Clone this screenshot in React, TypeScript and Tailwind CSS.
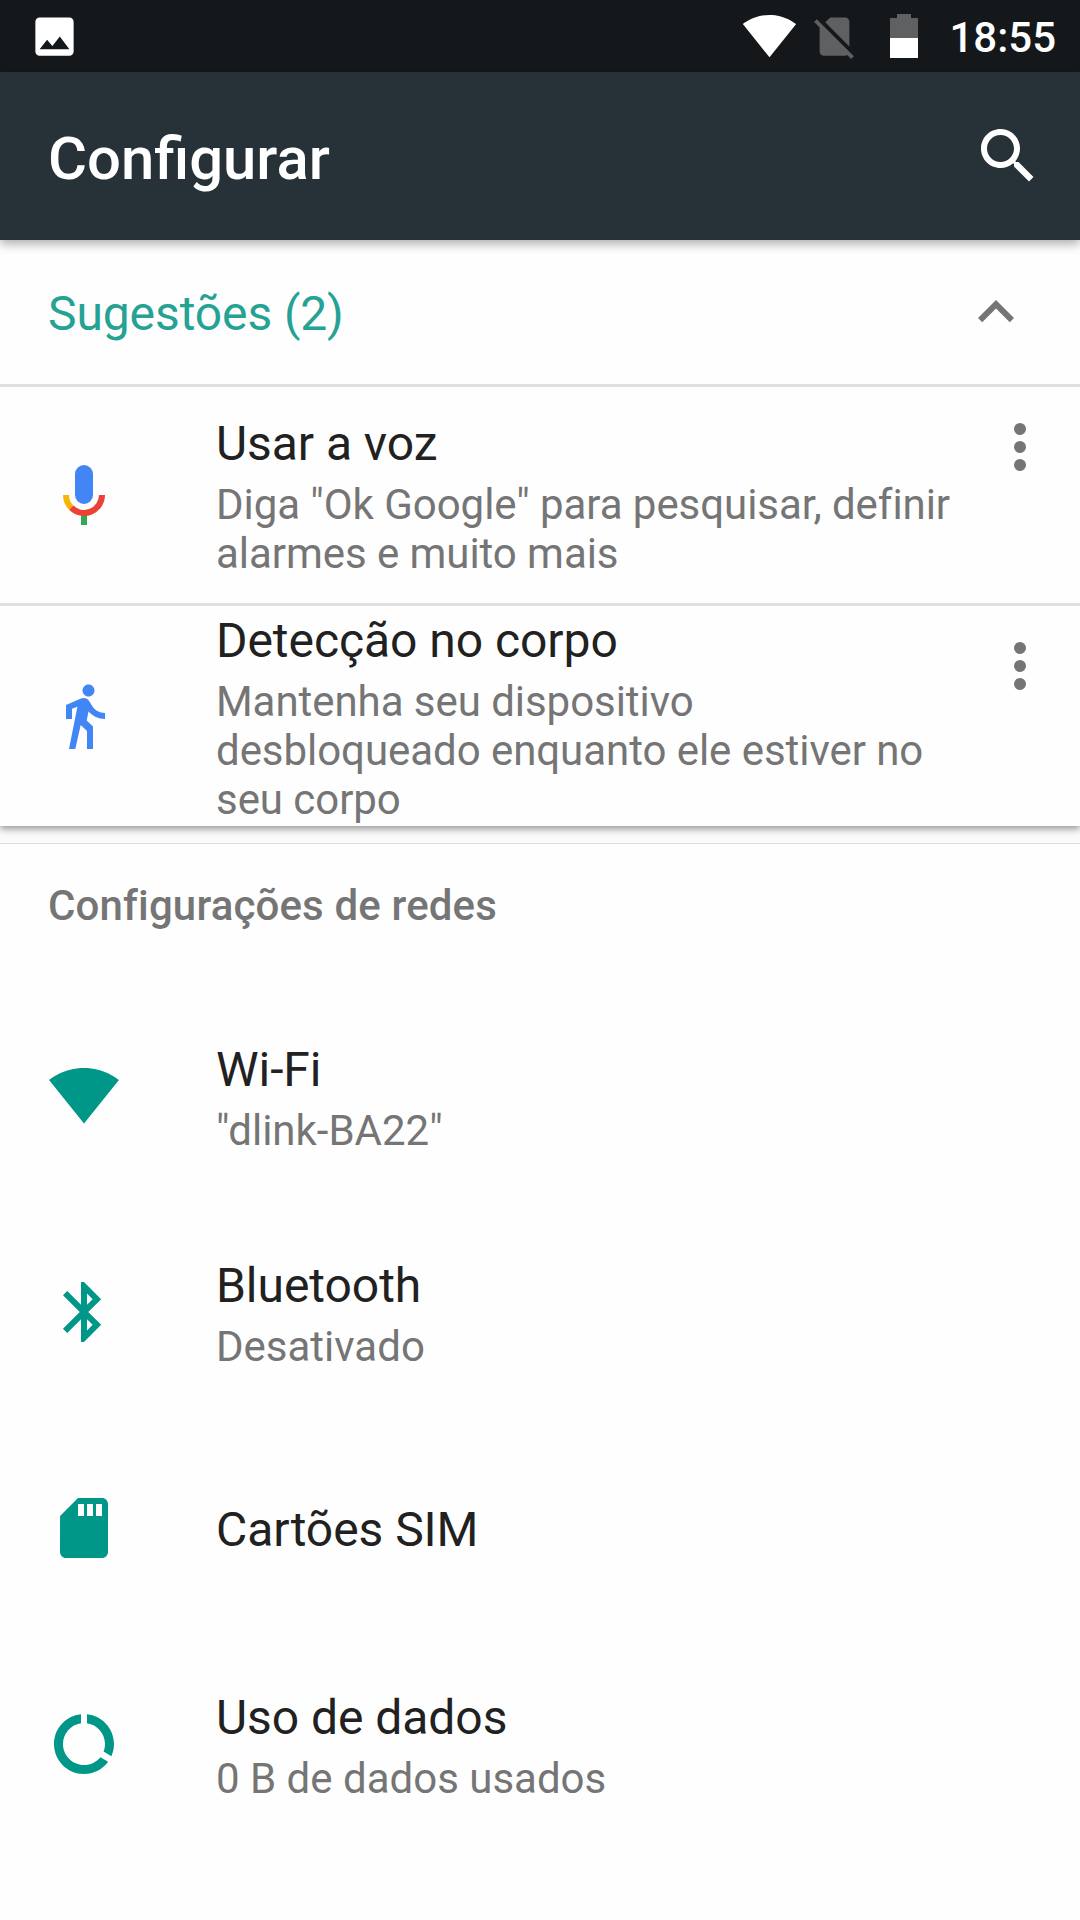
import type { ReactNode } from "react";

type IconProps = {
  className?: string;
};

type SettingItem = {
  title: string;
  summary?: string;
  icon: ReactNode;
};

function WifiIcon({ className }: IconProps) {
  return (
    <svg viewBox="0 0 24 24" fill="currentColor" className={className}>
      <path d="M12.01 21.49L23.64 7c-.45-.34-4.93-4-11.64-4C5.28 3 .81 6.66.36 7l11.63 14.49.01.01.01-.01z" />
    </svg>
  );
}

function PhotoIcon({ className }: IconProps) {
  return (
    <svg viewBox="0 0 24 24" fill="currentColor" className={className}>
      <path d="M21 19V5c0-1.1-.9-2-2-2H5c-1.1 0-2 .9-2 2v14c0 1.1.9 2 2 2h14c1.1 0 2-.9 2-2zM8.5 13.5l2.5 3.01L14.5 12l4.5 6H5l3.5-4.5z" />
    </svg>
  );
}

function NoSimIcon({ className }: IconProps) {
  return (
    <svg viewBox="0 0 24 24" fill="currentColor" className={className}>
      <path d="M18.99 5c0-1.1-.89-2-1.99-2h-7L7.66 5.34 19 16.68 18.99 5zM3.65 3.88L2.38 5.15 5 7.77V19c0 1.1.9 2 2 2h10.01c.35 0 .67-.1.96-.26l1.88 1.88 1.27-1.27L3.65 3.88z" />
    </svg>
  );
}

function BatteryIcon({ className }: IconProps) {
  return (
    <svg viewBox="0 0 28 44" className={className}>
      <path d="M7 0h14v4h7v20H0V4h7z" fill="#5e6061" />
      <path d="M0 24h28v20H0z" fill="#fff" />
    </svg>
  );
}

function SearchIcon({ className }: IconProps) {
  return (
    <svg viewBox="0 0 24 24" fill="currentColor" className={className}>
      <path d="M15.5 14h-.79l-.28-.27C15.41 12.59 16 11.11 16 9.5 16 5.91 13.09 3 9.5 3S3 5.91 3 9.5 5.91 16 9.5 16c1.61 0 3.09-.59 4.23-1.57l.27.28v.79l5 4.99L20.49 19l-4.99-5zm-6 0C7.01 14 5 11.99 5 9.5S7.01 5 9.5 5 14 7.01 14 9.5 11.99 14 9.5 14z" />
    </svg>
  );
}

function CollapseIcon({ className }: IconProps) {
  return (
    <svg viewBox="0 0 24 24" fill="currentColor" className={className}>
      <path d="M12 8l-6 6 1.41 1.41L12 10.83l4.59 4.58L18 14z" />
    </svg>
  );
}

function MoreIcon({ className }: IconProps) {
  return (
    <svg viewBox="0 0 24 24" fill="currentColor" className={className}>
      <circle cx="12" cy="6" r="2" />
      <circle cx="12" cy="12" r="2" />
      <circle cx="12" cy="18" r="2" />
    </svg>
  );
}

function MicIcon({ className }: IconProps) {
  return (
    <svg viewBox="0 0 24 24" fill="none" className={className}>
      <rect x="9" y="2" width="6" height="13" rx="3" fill="#4285f4" />
      <path d="M11 18.5h2V22h-2z" fill="#34a853" />
      <path d="M6 12a6 6 0 0 0 1.76 4.24" stroke="#f9b504" strokeWidth="2" />
      <path d="M7.76 16.24A6 6 0 0 0 18 12" stroke="#ea4335" strokeWidth="2" />
    </svg>
  );
}

function WalkIcon({ className }: IconProps) {
  return (
    <svg viewBox="0 0 24 24" fill="#4285f4" className={className}>
      <path d="M13.5 5.5c1.1 0 2-.9 2-2s-.9-2-2-2-2 .9-2 2 .9 2 2 2zM9.8 8.9L7 23h2.1l1.8-8 2.1 2v6h2v-7.5l-2.1-2 .6-3C14.8 12 16.8 13 19 13v-2c-1.9 0-3.5-1-4.3-2.4l-1-1.6c-.4-.6-1-1-1.7-1-.3 0-.5.1-.8.1L6 8.3V13h2V9.6l1.8-.7" />
    </svg>
  );
}

function BluetoothIcon({ className }: IconProps) {
  return (
    <svg viewBox="0 0 24 24" fill="currentColor" className={className}>
      <path d="M17.71 7.71L12 2h-1v7.59L6.41 5 5 6.41 10.59 12 5 17.59 6.41 19 11 14.41V22h1l5.71-5.71-4.3-4.29 4.3-4.29zM13 5.83l1.88 1.88L13 9.59V5.83zm1.88 10.46L13 18.17v-3.76l1.88 1.88z" />
    </svg>
  );
}

function SimCardIcon({ className }: IconProps) {
  return (
    <svg viewBox="0 0 24 24" fill="currentColor" className={className}>
      <path d="M18 2h-8L4.02 8 4 20c0 1.1.9 2 2 2h12c1.1 0 2-.9 2-2V4c0-1.1-.9-2-2-2zm-6 6h-2V4h2v4zm3 0h-2V4h2v4zm3 0h-2V4h2v4z" />
    </svg>
  );
}

function DataUsageIcon({ className }: IconProps) {
  return (
    <svg viewBox="0 0 24 24" fill="currentColor" className={className}>
      <path d="M13 2.05v3.03c3.39.49 6 3.39 6 6.92 0 .9-.18 1.75-.48 2.54l2.6 1.53c.56-1.24.88-2.62.88-4.07 0-5.18-3.95-9.45-9-9.95zM12 19c-3.87 0-7-3.13-7-7 0-3.53 2.61-6.43 6-6.92V2.05c-5.06.5-9 4.76-9 9.95 0 5.52 4.47 10 9.99 10 3.31 0 6.24-1.61 8.06-4.09l-2.6-1.53C16.17 17.98 14.21 19 12 19z" />
    </svg>
  );
}

const suggestions: SettingItem[] = [
  {
    title: "Usar a voz",
    summary: 'Diga "Ok Google" para pesquisar, definir alarmes e muito mais',
    icon: <MicIcon className="size-18" />,
  },
  {
    title: "Detecção no corpo",
    summary:
      "Mantenha seu dispositivo desbloqueado enquanto ele estiver no seu corpo",
    icon: <WalkIcon className="size-18" />,
  },
];

const networkItems: SettingItem[] = [
  {
    title: "Wi-Fi",
    summary: '"dlink-BA22"',
    icon: <WifiIcon className="mb-0.5 size-18" />,
  },
  {
    title: "Bluetooth",
    summary: "Desativado",
    icon: <BluetoothIcon className="size-18" />,
  },
  {
    title: "Cartões SIM",
    icon: <SimCardIcon className="size-18" />,
  },
  {
    title: "Uso de dados",
    summary: "0 B de dados usados",
    icon: <DataUsageIcon className="size-18" />,
  },
];

function StatusBar() {
  return (
    <div className="flex h-[72px] shrink-0 items-center justify-between bg-[#14181b] pl-[28.5px] pr-6 text-white">
      <PhotoIcon className="size-[51px]" />
      <div className="flex items-center">
        <WifiIcon className="mb-0.5 size-[55px]" />
        <NoSimIcon className="ml-3 size-[51px] text-[#5e6061]" />
        <BatteryIcon className="ml-[30px] h-11 w-7" />
        <span className="ml-[31px] pt-0.5 text-[42px] font-medium leading-[49px]">
          18:55
        </span>
      </div>
    </div>
  );
}

function ItemText({ title, summary }: { title: string; summary?: string }) {
  return (
    <div className="min-w-0 flex-1 pt-1">
      <p className="text-5xl leading-[56px] tracking-[-0.05px] text-[#212121]">
        {title}
      </p>
      {summary && (
        <p className="mt-2 text-[42px] leading-[49px] text-[#757575]">
          {summary}
        </p>
      )}
    </div>
  );
}

export default function App() {
  return (
    <div
      className="flex h-[1920px] w-[1080px] flex-col overflow-hidden bg-[#fafafa]"
      style={{ fontFamily: "Roboto, 'Noto Sans', sans-serif" }}
    >
      <StatusBar />

      <header className="relative z-10 flex h-[168px] shrink-0 items-center justify-between bg-[#273238] pl-12 pr-9 text-white shadow-[0_4px_10px_rgba(0,0,0,0.32)]">
        <h1 className="pt-[5px] text-[59.8px] font-medium leading-[70px]">
          Configurar
        </h1>
        <SearchIcon className="size-18" />
      </header>

      <section className="relative shrink-0 bg-[#fefefe] shadow-[0_3px_7px_rgba(0,0,0,0.4)]">
        <div className="flex h-36 items-center justify-between px-12">
          <h2 className="pt-1 text-5xl leading-[56px] tracking-[-0.1px] text-[#26a295]">
            Sugestões (2)
          </h2>
          <CollapseIcon className="size-18 text-[#757575]" />
        </div>
        {suggestions.map((item) => (
          <div
            key={item.title}
            className="box-content flex h-[216px] w-[1008px] items-center border-t-3 border-[#dfdfdf] pl-12 pr-6 last:h-[220px]"
          >
            <div className="mr-24 shrink-0">{item.icon}</div>
            <div className="mr-6 flex min-w-0 flex-1 tracking-[-0.05px]">
              <ItemText title={item.title} summary={item.summary} />
            </div>
            <MoreIcon className="mt-6 size-18 shrink-0 self-start text-[#757575]" />
          </div>
        ))}
      </section>

      <section className="mt-[17px] flex-1 border-t border-[#dedede] bg-[#fefefe]">
        <h2 className="h-36 px-12 pt-[37px] text-[42px] font-medium leading-[49px] tracking-[0.15px] text-[#757575]">
          Configurações de redes
        </h2>
        {networkItems.map((item) => (
          <div key={item.title} className="flex h-[216px] items-center px-12">
            <div className="mr-24 shrink-0 text-[#009688]">{item.icon}</div>
            <ItemText title={item.title} summary={item.summary} />
          </div>
        ))}
      </section>
    </div>
  );
}
